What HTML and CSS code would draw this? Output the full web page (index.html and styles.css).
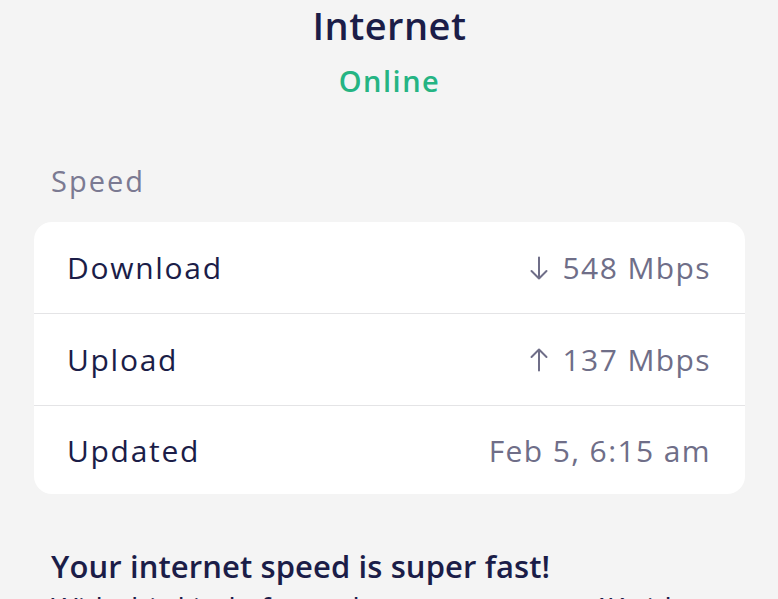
FILE: index.html
```html
<!DOCTYPE html>
<html>
<head>
    <meta name="viewport" content="width=device-width, initial-scale=1.0">
    <link rel="stylesheet" href="styles.css">
</head>
<body>
    <div class="page">
        <header class="header">
            <h1 class="title">Internet</h1>
            <div class="status">Online</div>
        </header>

        <div class="section-label">Speed</div>
        <div class="card">
            <div class="row">
                <span class="row-label">Download</span>
                <span class="row-value">
                    <svg class="arrow" viewBox="0 0 18 24" aria-label="↓"><path d="M9 1.5V22.5M1.5 15L9 22.5L16.5 15"/></svg>
                    548 Mbps
                </span>
            </div>
            <div class="row">
                <span class="row-label">Upload</span>
                <span class="row-value">
                    <svg class="arrow" viewBox="0 0 18 24" aria-label="↑"><path d="M9 22.5V1.5M1.5 9L9 1.5L16.5 9"/></svg>
                    137 Mbps
                </span>
            </div>
            <div class="row">
                <span class="row-label">Updated</span>
                <span class="row-value">Feb 5, 6:15 am</span>
            </div>
        </div>

        <div class="summary">
            <h2 class="summary-title">Your internet speed is super fast!</h2>
            <p class="summary-text">With this kind of speed, you can stream 4K video on several devices at once.</p>
        </div>
    </div>
</body>
</html>
```

FILE: styles.css
```css
* {margin: 0; padding: 0; box-sizing: border-box;}
body {
    background: #f4f4f4;
    font-family: "Open Sans", "Noto Sans", sans-serif;
    color: #1b1d48;
    overflow: hidden;
    height: 599px;
}

.page {
    padding: 0 33px 0 34px;
}

.header {
    display: flex;
    flex-direction: column;
    align-items: center;
    padding-top: 2px;
}

.title {
    font-size: 38px;
    font-weight: 600;
    line-height: 46px;
    letter-spacing: 0.5px;
}

.status {
    font-size: 29px;
    font-weight: 600;
    color: #25b483;
    line-height: 40px;
    margin-top: 13px;
    letter-spacing: 1.5px;
}

.section-label {
    font-size: 29px;
    color: #7b7a92;
    line-height: 36px;
    margin: 62px 0 0 17px;
    letter-spacing: 2px;
}

.card {
    background: #fff;
    border-radius: 18px;
    margin-top: 23px;
}

.row {
    display: flex;
    justify-content: space-between;
    align-items: center;
    height: 92px;
    padding: 0 34px 0 33px;
    border-bottom: 1.5px solid #e4e4e6;
}

.row:last-child {
    border-bottom: none;
    height: 88px;
}

.row-label {
    font-size: 30px;
    color: #1b1d48;
    letter-spacing: 1.7px;
}

.row-value {
    display: flex;
    align-items: center;
    gap: 15px;
    font-size: 30px;
    color: #6f6e88;
    letter-spacing: 1.4px;
}

.arrow {
    width: 18px;
    height: 24px;
    fill: none;
    stroke: #6f6e88;
    stroke-width: 2;
    stroke-linecap: round;
    stroke-linejoin: round;
}

.summary {
    padding: 52px 0 0 17px;
}

.summary-title {
    font-size: 31px;
    font-weight: 600;
    line-height: 40px;
    letter-spacing: 0.1px;
}

.summary-text {
    font-size: 29px;
    line-height: 36px;
    margin-top: 4px;
}
```
